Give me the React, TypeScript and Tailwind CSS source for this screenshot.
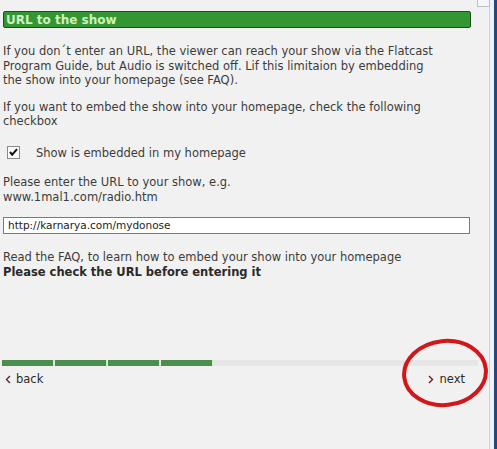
import React from 'react';

const Checkbox: React.FC = () => (
  <svg width="13" height="13" viewBox="0 0 13 13" className="shrink-0">
    <rect x="0.5" y="0.5" width="12" height="12" fill="#fafafa" stroke="#8a8a8a" />
    <path d="M3 6 L5.2 8.6 L10 3.2" fill="none" stroke="#111" strokeWidth="2" />
  </svg>
);

const Chevron: React.FC<{ dir: 'left' | 'right' }> = ({ dir }) => (
  <svg width="6" height="9" viewBox="0 0 6 9" className="shrink-0">
    <path
      d={dir === 'left' ? 'M5 1 L1.5 4.5 L5 8' : 'M1 1 L4.5 4.5 L1 8'}
      fill="none"
      stroke={dir === 'left' ? '#5a2a2a' : '#6a1a1a'}
      strokeWidth="1.4"
    />
  </svg>
);

const App: React.FC = () => {
  const segments = [0, 1, 2, 3];

  return (
    <div
      className="relative flex w-[497px] h-[449px] bg-[#f1f1f1] text-[#3c3c3c] overflow-hidden"
      style={{ fontFamily: '"DejaVu Sans", Verdana, sans-serif' }}
    >
      <div className="flex flex-col w-[489px] pt-[11px]">
        <div className="ml-[3px] w-[468px] h-[17px] flex items-center px-[2px] rounded-[2px] border border-[#1b4f1b] bg-[#339633] text-[#cdf2bb] text-[12px] font-bold">
          URL to the show
        </div>

        <div className="pl-[3px] pr-[14px] text-[11.5px] leading-[14.5px]">
          <p className="mt-[16px]">
            If you don´t enter an URL, the viewer can reach your show via the Flatcast
            <br />
            Program Guide, but Audio is switched off. Lif this limitaion by embedding
            <br />
            the show into your homepage (see FAQ).
          </p>
          <p className="mt-[12px]">
            If you want to embed the show into your homepage, check the following
            <br />
            checkbox
          </p>
          <div className="mt-[17px] flex items-center gap-[16px] pl-[4px]">
            <Checkbox />
            <span>Show is embedded in my homepage</span>
          </div>
          <p className="mt-[15px]">
            Please enter the URL to your show, e.g.
            <br />
            www.1mal1.com/radio.htm
          </p>
          <div className="mt-[13px] w-[467px] h-[17px] flex items-center px-[4px] border border-[#7a7a7a] bg-white text-[10.5px] text-[#222]">
            http://karnarya.com/mydonose
          </div>
          <p className="mt-[16px]">
            Read the FAQ, to learn how to embed your show into your homepage
            <br />
            <span className="font-bold text-[#2a2a2a]">Please check the URL before entering it</span>
          </p>
        </div>

        <div className="mt-[81px] ml-[2px] w-[476px] h-[6px] flex bg-[#e6e6e6]">
          {segments.map(i => (
            <div key={i} className="w-[52px] h-full bg-[#4c8e4c] mr-[1px] border-r border-[#c8efc0]" />
          ))}
        </div>

        <div className="mt-[5px] flex items-center justify-between pl-[5px] pr-[24px] text-[11.5px] text-[#2a2a2a]">
          <div className="flex items-center gap-[5px]">
            <Chevron dir="left" />
            <span>back</span>
          </div>
          <div className="flex items-center gap-[6px]">
            <Chevron dir="right" />
            <span>next</span>
          </div>
        </div>
      </div>

      <div className="w-[5px] h-full bg-[#eef2f8] border-l border-[#c9d2de]" />
      <div className="w-[3px] h-full bg-[#27477a]" />

      <div className="absolute top-0 right-[7px] w-[13px] h-[7px] border border-t-0 border-[#b8c0cc] bg-[#f4f6fa]" />

      <svg
        className="absolute left-[401px] top-[338px] pointer-events-none"
        width="90"
        height="72"
        viewBox="0 0 90 72"
      >
        <ellipse cx="44" cy="35" rx="41" ry="32" fill="none" stroke="#d2161a" strokeWidth="4" transform="rotate(-6 44 35)" />
      </svg>
    </div>
  );
};

export default App;
